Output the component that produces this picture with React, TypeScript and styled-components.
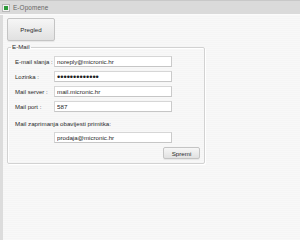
import React from "react";
import styled, { createGlobalStyle } from "styled-components";

const GlobalStyle = createGlobalStyle`
  html, body {
    margin: 0;
    padding: 0;
    width: 300px;
    height: 240px;
    overflow: hidden;
    font-family: "Liberation Sans", Arial, sans-serif;
  }
  * { box-sizing: border-box; }
`;

const Window = styled.div`
  display: flex;
  flex-direction: column;
  width: 300px;
  height: 240px;
`;

const TitleBar = styled.div`
  display: flex;
  align-items: center;
  gap: 3px;
  height: 15px;
  padding-left: 2px;
  background: #dadada;
  border-top: 1px solid #c8c8c8;
  border-bottom: 1px solid #fbfbfb;
`;

const AppIcon = styled.span`
  display: flex;
  align-items: center;
  justify-content: center;
  width: 8px;
  height: 8px;
  background: #f4f4f4;
  border: 1px solid #b8b8b8;
`;

const Title = styled.span`
  font-size: 6.4px;
  color: #666;
  letter-spacing: 0.1px;
`;

const Body = styled.div`
  flex: 1;
  display: flex;
  flex-direction: column;
  align-items: flex-start;
  padding: 3px 0 0 4px;
  background: repeating-linear-gradient(#f8f8f8 0 1px, #f5f5f5 1px 2px);
  border-left: 3px solid #dcdcdc;
`;

const Button = styled.button<{ $w: number; $h: number }>`
  width: ${(p) => p.$w}px;
  height: ${(p) => p.$h}px;
  padding: 0;
  font-family: inherit;
  font-size: 6.2px;
  color: #2a2a2a;
  background: linear-gradient(#f6f6f6, #e1e1e1);
  border: 1px solid #c4c4c4;
  border-radius: 2px;
  box-shadow: 0 1px 0 #e8e8e8;
`;

const Fieldset = styled.fieldset`
  width: 198px;
  margin: 2px 0 0 0;
  padding: 5px 4px 4px 7px;
  border: 1px solid #d2d2d2;
  border-radius: 2px;
  box-shadow: inset 1px 1px 0 #ffffff, 1px 1px 0 #ffffff;
  display: flex;
  flex-direction: column;
`;

const Legend = styled.legend`
  margin-left: -4px;
  padding: 0 1px;
  font-size: 6.2px;
  line-height: 8px;
  color: #2a2a2a;
`;

const Grid = styled.div`
  display: grid;
  grid-template-columns: 39px 118px;
  grid-auto-rows: 11px;
  row-gap: 4px;
  align-items: center;
`;

const Label = styled.label`
  font-size: 6px;
  color: #2a2a2a;
  white-space: nowrap;
`;

const Field = styled.input<{ $secret?: boolean }>`
  width: 118px;
  height: 11px;
  margin: 0;
  padding: 0 2px;
  font-family: inherit;
  font-size: ${(p) => (p.$secret ? "9.2px" : "6.2px")};
  color: #1e1e1e;
  background: #fff;
  border: 1px solid #d6d6d6;
  border-right-color: #cacaca;
  border-bottom-color: #c6c6c6;
  border-radius: 0;
  outline: none;
`;

const SectionLabel = styled(Label)`
  margin-top: 8px;
  line-height: 8px;
  font-size: 6.2px;
`;

const Indented = styled.div`
  display: flex;
  margin: 4px 0 0 39px;
`;

const Actions = styled.div`
  display: flex;
  justify-content: flex-end;
  margin-top: 4px;
`;

export default function App() {
  return (
    <>
      <GlobalStyle />
      <Window>
        <TitleBar>
          <AppIcon>
            <svg width="4" height="4" viewBox="0 0 4 4">
              <rect width="4" height="4" fill="#2e9a3a" />
            </svg>
          </AppIcon>
          <Title>E-Opomene</Title>
        </TitleBar>
        <Body>
          <Button $w={48} $h={23}>Pregled</Button>
          <Fieldset>
            <Legend>E-Mail</Legend>
            <Grid>
              <Label>E-mail slanja :</Label>
              <Field readOnly value="noreply@micronic.hr" />
              <Label>Lozinka :</Label>
              <Field readOnly $secret type="password" value="abcdefghijklm" />
              <Label>Mail server :</Label>
              <Field readOnly value="mail.micronic.hr" />
              <Label>Mail port :</Label>
              <Field readOnly value="587" />
            </Grid>
            <SectionLabel>Mail zaprimanja obavijesti primitka:</SectionLabel>
            <Indented>
              <Field readOnly value="prodaja@micronic.hr" />
            </Indented>
            <Actions>
              <Button $w={37} $h={12}>Spremi</Button>
            </Actions>
          </Fieldset>
        </Body>
      </Window>
    </>
  );
}
